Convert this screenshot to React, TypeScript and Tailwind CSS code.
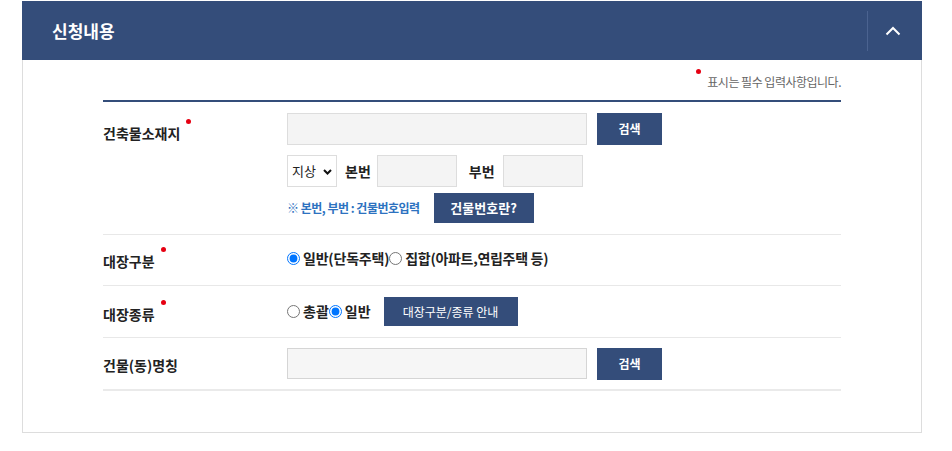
import React from "react";

const Req = () => (
  <span className="absolute -right-[11px] top-[-4px] w-[5px] h-[5px] rounded-full bg-[#e60012]" />
);

const Label = ({ text }: { text: string }) => (
  <div className="w-[184px] shrink-0">
    <span className="relative text-[14px] font-bold text-[#222] leading-[20px]">
      {text}
      {text !== "건물(동)명칭" && <Req />}
    </span>
  </div>
);

const NavyBtn = ({ children, className }: { children: React.ReactNode; className: string }) => (
  <button className={`bg-[#344d7a] text-white font-bold flex items-center justify-center ${className}`}>
    {children}
  </button>
);

export default function App() {
  return (
    <div className="w-[952px] h-[451px] bg-white pt-px font-['Noto_Sans_CJK_KR','Noto_Sans',sans-serif]">
      <div className="ml-[22px] w-[900px]">
        <div className="h-[59px] bg-[#344d7a] flex items-center justify-between">
          <h2 className="pl-[30px] text-[17px] font-bold text-white">신청내용</h2>
          <div className="flex items-center h-full">
            <div className="w-px h-[40px] bg-[#4b6390]" />
            <div className="w-[54px] flex items-center justify-center pr-[5px]">
              <svg width="16" height="10" viewBox="0 0 16 10" fill="none">
                <path d="M1.5 8.5 8 2l6.5 6.5" stroke="white" strokeWidth="2" />
              </svg>
            </div>
          </div>
        </div>

        <div className="h-[373px] border border-t-0 border-[#ddd] px-[80px]">
          <div className="h-[40px] flex items-center justify-end pt-[3px]">
            <span className="relative text-[12px] text-[#666] tracking-[-0.5px]">
              <span className="absolute -left-[11px] top-[-4px] w-[5px] h-[5px] rounded-full bg-[#e60012]" />
              표시는 필수 입력사항입니다.
            </span>
          </div>
          <div className="h-[2px] bg-[#344d7a]" />

          {/* 건축물소재지 */}
          <div className="flex pt-[11px] pb-[11px] border-b border-[#e8e8e8]">
            <div className="pt-[7px]">
              <Label text="건축물소재지" />
            </div>
            <div className="flex flex-col">
              <div className="flex gap-[10px]">
                <input className="w-[300px] h-[32px] bg-[#f4f4f4] border border-[#ddd]" />
                <NavyBtn className="w-[65px] h-[32px] text-[12px]">검색</NavyBtn>
              </div>
              <div className="flex items-center mt-[10px]">
                <div className="relative w-[50px] h-[32px] border border-[#ddd] bg-white flex items-center pl-[4px] text-[13px] text-[#222]">
                  지상
                  <svg className="absolute right-[4px] top-[13px]" width="9" height="6" viewBox="0 0 9 6" fill="none">
                    <path d="M1 1l3.5 3.5L8 1" stroke="#111" strokeWidth="2" />
                  </svg>
                </div>
                <span className="ml-[8px] text-[14px] font-bold text-[#222]">본번</span>
                <input className="ml-[6px] w-[80px] h-[32px] bg-[#f4f4f4] border border-[#ddd]" />
                <span className="ml-[12px] text-[14px] font-bold text-[#222]">부번</span>
                <input className="ml-[8px] w-[80px] h-[32px] bg-[#f4f4f4] border border-[#ddd]" />
              </div>
              <div className="flex items-center mt-[6px]">
                <span className="text-[12px] font-bold text-[#2d72c0] tracking-[-0.5px]">※ 본번, 부번 : 건물번호입력</span>
                <NavyBtn className="ml-[14px] w-[100px] h-[30px] text-[13px]">건물번호란?</NavyBtn>
              </div>
            </div>
          </div>

          {/* 대장구분 */}
          <div className="flex items-center h-[51px] pb-[4px] border-b border-[#e8e8e8]">
            <div className="pt-[3px]">
              <Label text="대장구분" />
            </div>
            <label className="flex items-center gap-[3px] text-[14px] font-bold text-[#222] tracking-[-0.2px]">
              <input type="radio" name="g1" defaultChecked className="w-[13px] h-[13px]" />
              일반(단독주택)
            </label>
            <label className="flex items-center gap-[3px] text-[14px] font-bold text-[#222] tracking-[-0.3px]">
              <input type="radio" name="g1" className="w-[13px] h-[13px]" />
              집합(아파트,연립주택 등)
            </label>
          </div>

          {/* 대장종류 */}
          <div className="flex items-center h-[52px] border-b border-[#e8e8e8]">
            <div className="pt-[3px]">
              <Label text="대장종류" />
            </div>
            <label className="flex items-center gap-[3px] text-[14px] font-bold text-[#222]">
              <input type="radio" name="g2" className="w-[13px] h-[13px]" />
              총괄
            </label>
            <label className="flex items-center gap-[3px] text-[14px] font-bold text-[#222]">
              <input type="radio" name="g2" defaultChecked className="w-[13px] h-[13px]" />
              일반
            </label>
            <NavyBtn className="ml-[13px] w-[134px] h-[29px] text-[12px] font-normal">대장구분/종류 안내</NavyBtn>
          </div>

          {/* 건물(동)명칭 */}
          <div className="flex items-center h-[53px] border-b-2 border-[#eaeaea]">
            <Label text="건물(동)명칭" />
            <div className="flex gap-[10px]">
              <input className="w-[300px] h-[31px] bg-[#f6f6f6] border border-[#d5d5d5]" />
              <NavyBtn className="w-[65px] h-[32px] text-[12px]">검색</NavyBtn>
            </div>
          </div>
        </div>
      </div>
    </div>
  );
}
